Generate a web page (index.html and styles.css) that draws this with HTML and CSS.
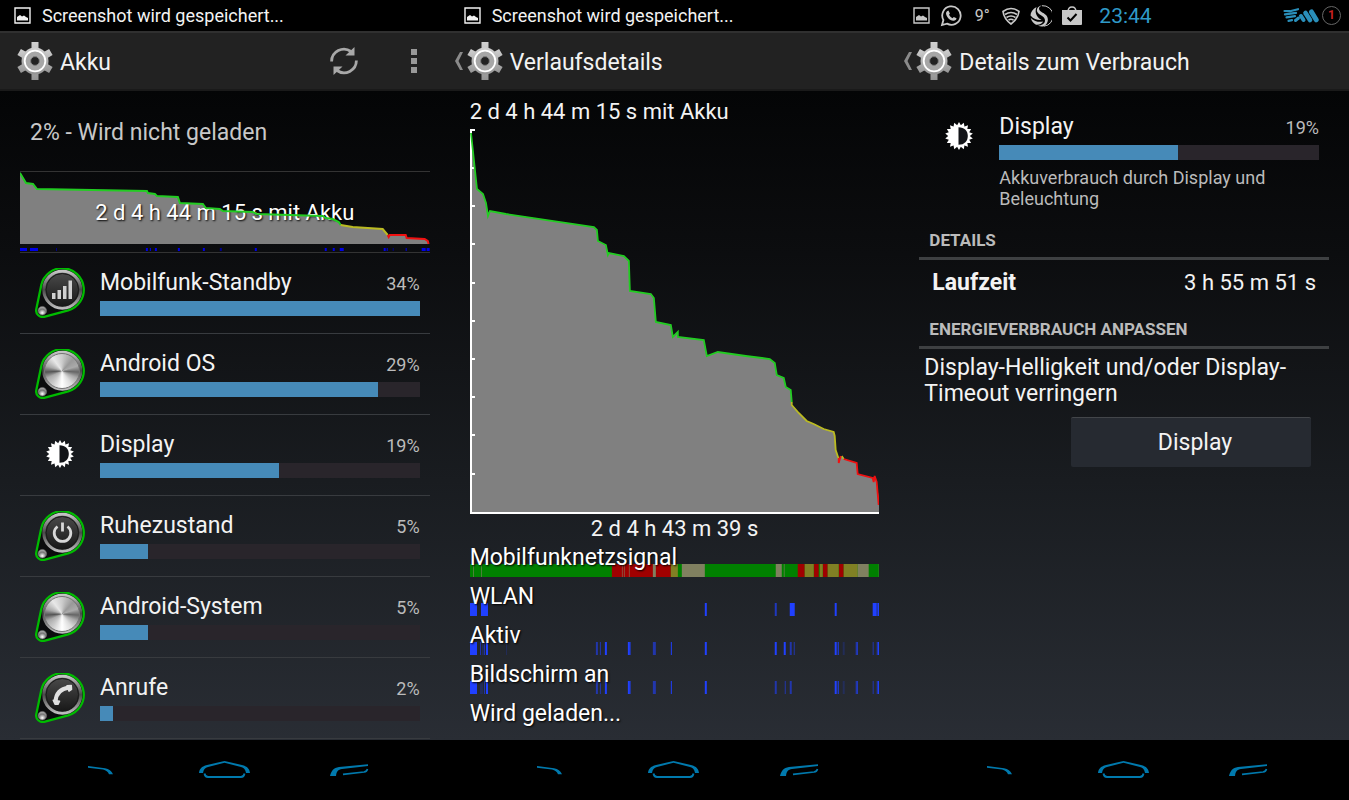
FILE: index.html
```html
<!DOCTYPE html>
<html lang="de">
<head>
    <meta charset="UTF-8">
    <meta name="viewport" content="width=device-width, initial-scale=1.0">
    <title>Akku</title>
    <link rel="stylesheet" href="styles.css">
</head>
<body>
    <!-- shared icons -->
    <svg class="defs" width="0" height="0" aria-hidden="true">
        <defs>
            <linearGradient id="gearFill" x1="0" y1="0" x2="0" y2="1">
                <stop offset="0" stop-color="#d0d0d0"/>
                <stop offset="1" stop-color="#949494"/>
            </linearGradient>
            <linearGradient id="ringFill" x1="0" y1="0" x2="0" y2="1">
                <stop offset="0" stop-color="#c4c4c4"/>
                <stop offset="0.5" stop-color="#4a4a4a"/>
                <stop offset="1" stop-color="#bdbdbd"/>
            </linearGradient>
            <linearGradient id="discFill" x1="0" y1="0" x2="0" y2="1">
                <stop offset="0" stop-color="#4c4c4c"/>
                <stop offset="1" stop-color="#151515"/>
            </linearGradient>
            <radialGradient id="knobFill" cx="0.5" cy="0.75" r="0.7">
                <stop offset="0" stop-color="#ffffff"/>
                <stop offset="0.6" stop-color="#777777"/>
                <stop offset="1" stop-color="#b0b0b0"/>
            </radialGradient>
            <symbol id="gear" viewBox="0 0 36 38">
                <g fill="url(#gearFill)">
                    <path d="M14.5 0h7v9h-7zM14.5 29h7v9h-7z"/>
                    <path d="M3.9 7l-3.5 6.1 8 4.6 3.5-6.1zM32.1 7l3.5 6.1-8 4.6-3.5-6.1zM3.9 31l-3.5-6.1 8-4.6 3.5 6.1zM32.1 31l3.5-6.1-8-4.6-3.500 6.1z"/>
                    <circle cx="18" cy="19" r="13.5"/>
                </g>
                <circle cx="18" cy="19" r="10.3" fill="#a6a6a6" stroke="#fff" stroke-width="1.8"/>
                <circle cx="18" cy="19" r="4.4" fill="#222" stroke="#808080" stroke-width="1"/>
            </symbol>
            <symbol id="picture" viewBox="0 0 17 17">
                <path d="M1 1h15v15H1z" fill="none" stroke="currentColor" stroke-width="1.4"/>
                <path d="M3 13.5V10l3-2 2 1.5 2-1 2 1.5 2 1v2.5z" fill="currentColor"/>
            </symbol>
            <symbol id="brightness" viewBox="-14 -14 28 28">
                <g fill="#fff">
                    <path id="tri" d="M0-14L12.1 7h-24.2z"/>
                    <use href="#tri" transform="rotate(20)"/>
                    <use href="#tri" transform="rotate(40)"/>
                    <use href="#tri" transform="rotate(60)"/>
                    <use href="#tri" transform="rotate(80)"/>
                    <use href="#tri" transform="rotate(100)"/>
                </g>
                <path d="M-.5-8.8C5.5-8.8 8.8-5 8.8 0S5.5 8.8-.5 8.8z" fill="#121418"/>
            </symbol>
            <symbol id="orb" viewBox="0 0 50 50">
                <path d="M6.3 17.1A21.5 21.5 0 1 1 33.2 42.4L9.1 48.8A6.5 6.5 0 0 1 1.2 41.6z" fill="#0b0c0d" stroke="#0b0" stroke-width="2.3"/>
                <circle cx="27.3" cy="21.7" r="18.5" fill="url(#discFill)" stroke="url(#ringFill)" stroke-width="3"/>
                <circle cx="27.3" cy="21.7" r="16.2" fill="none" stroke="#1a1a1a" stroke-width="1"/>
                <circle cx="7.3" cy="42.7" r="4.3" fill="url(#knobFill)" stroke="#666" stroke-width="0.6"/>
            </symbol>
            <symbol id="navBack" viewBox="0 0 52 20">
                <path d="M14 6L31 8.2C35 8.8 37.5 11 39 14.3H35C34 11.5 32 10 29 9.4L14 7.8z" fill="currentColor"/>
            </symbol>
            <symbol id="navHome" viewBox="0 0 52 20">
                <path d="M0 13C.5 8.5 3 6.500 7 5.2L25.5 1L44 5.2C48 6.5 50.5 8.5 51 13H47C46.5 9.5 45 8 42 7L25.5 2.8L9 7C6 8 4.5 9.5 4 13z" fill="currentColor"/>
                <path d="M5.5 13.5Q6 17 9 17H42Q45 17 45.5 13.5" fill="none" stroke="currentColor" stroke-width="1.8"/>
            </symbol>
            <symbol id="navRecent" viewBox="0 0 52 20">
                <path d="M6 16C7.500 10.5 9.5 8 15 7L44 4.2V6L18 9C14 9.6 12.5 11.5 12 16z" fill="currentColor"/>
                <path d="M19 14.4L40 12Q43 11.5 43.5 9" fill="none" stroke="currentColor" stroke-width="1.6"/>
            </symbol>
        </defs>
    </svg>

    <main class="screens">
        <!-- battery overview -->
        <section class="screen">
            <div class="status">
                <svg class="pic"><use href="#picture"/></svg>
                <span>Screenshot wird gespeichert...</span>
            </div>
            <header class="bar">
                <span class="back"></span>
                <svg class="gear"><use href="#gear"/></svg>
                <h1>Akku</h1>
                <button class="action refresh" aria-label="Aktualisieren">
                    <svg width="28" height="30" viewBox="0 0 28 30" fill="none" stroke="#a8a8a8" stroke-width="2.8">
                        <path d="M1.6 15.5A12.3 12.3 0 0 1 21 5.5"/>
                        <path d="M26.4 14.5A12.3 12.3 0 0 1 7 24.5"/>
                        <path d="M24.5 1v8.5H15.5z" fill="#a8a8a8" stroke="none"/>
                        <path d="M3.5 29v-8.5H12.5z" fill="#a8a8a8" stroke="none"/>
                    </svg>
                </button>
                <button class="action more" aria-label="Menü">
                    <svg width="6" height="26" viewBox="0 0 6 26" fill="#999"><path d="M0 1h6v6H0zM0 10h6v6H0zM0 19h6v6H0z"/></svg>
                </button>
            </header>
            <div class="content">
                <p class="level">2% - Wird nicht geladen</p>
                <div class="mini">
                    <svg viewBox="0 0 410 80" preserveAspectRatio="none">
                        <path d="M0 0L6 11L13 12L17 17L127 19L128 21L135 22L137 24L158 25L160 31L183 32L186 36L200 37L203 39L233 40L237 42L303 44L306 46L313 47L319 50L321 53L333 55L363 57L368 63L386 63L387 66L405 67L409 69V72H0z" fill="#808080"/>
                        <path d="M0 77.5h7M10 77.5h8M126 77.5h2M130 77.5h1M135 77.5h2M158 77.5h2M183 77.5h2M235 77.5h2M305 77.5h2M313 77.5h2M320 77.5h4M364 77.5h2M367 77.5h1M386 77.5h1M402 77.5h4M407 77.5h3" stroke="#0000e6" stroke-width="3"/>
                        <path d="M36 77.5h1M200 77.5h2M373 77.5h1" stroke="#00008a" stroke-width="3"/>
                    </svg>
                    <span>2 d 4 h 44 m 15 s mit Akku</span>
                    <svg class="line" viewBox="0 0 410 80" preserveAspectRatio="none">
                        <path d="M0 1L6 11L13 12L17 17L127 19L128 21L135 22L137 24L158 25L160 31L183 32L186 36L200 37L203 39L233 40L237 42L303 44L306 46L313 47L319 50L321 53" stroke="#2c2"/>
                        <path d="M321 53L333 55L363 57L368 63" stroke="#bb2"/>
                        <path d="M368 63L369 65L370 63L386 63L387 66L405 67L408 69L409 72" stroke="#f01010"/>
                    </svg>
                </div>
                <ul class="usage">
                    <li>
                        <div class="icon">
                            <div class="orb">
                                <svg><use href="#orb"/></svg>
                                <svg class="glyph" viewBox="0 0 50 50" fill="#d0d0d0"><path d="M17 25h3.5v6H17zM22.5 22H26v9h-3.5zM28 18h3.5v13H28zM33.5 12.5H37V31h-3.5z"/></svg>
                            </div>
                        </div>
                        <div class="info">
                            <div class="label"><span>Mobilfunk-Standby</span><small>34%</small></div>
                            <div class="track"><div class="fill" style="width: 100%"></div></div>
                        </div>
                    </li>
                    <li>
                        <div class="icon">
                            <div class="orb"><svg><use href="#orb"/></svg><i class="metal"></i></div>
                        </div>
                        <div class="info">
                            <div class="label"><span>Android OS</span><small>29%</small></div>
                            <div class="track"><div class="fill" style="width: 87%"></div></div>
                        </div>
                    </li>
                    <li>
                        <div class="icon"><svg class="sun"><use href="#brightness"/></svg></div>
                        <div class="info">
                            <div class="label"><span>Display</span><small>19%</small></div>
                            <div class="track"><div class="fill" style="width: 56%"></div></div>
                        </div>
                    </li>
                    <li>
                        <div class="icon">
                            <div class="orb">
                                <svg><use href="#orb"/></svg>
                                <svg class="glyph" viewBox="0 0 50 50" fill="none" stroke="#d8d8d8" stroke-width="2.8"><path d="M22.5 15.5A8.3 8.3 0 1 0 32.5 15.5M27.5 11.5v9"/></svg>
                            </div>
                        </div>
                        <div class="info">
                            <div class="label"><span>Ruhezustand</span><small>5%</small></div>
                            <div class="track"><div class="fill" style="width: 15%"></div></div>
                        </div>
                    </li>
                    <li>
                        <div class="icon">
                            <div class="orb"><svg><use href="#orb"/></svg><i class="metal"></i></div>
                        </div>
                        <div class="info">
                            <div class="label"><span>Android-System</span><small>5%</small></div>
                            <div class="track"><div class="fill" style="width: 15%"></div></div>
                        </div>
                    </li>
                    <li>
                        <div class="icon">
                            <div class="orb">
                                <svg><use href="#orb"/></svg>
                                <svg class="glyph" viewBox="0 0 50 50" fill="none" stroke="#e0e0e0">
                                    <path d="M20.5 28.5Q21 16.500 34 14.5" stroke-width="4"/>
                                    <path d="M32 12.6L36.3 12.4L36.6 16.500L34 18.2zM18.2 27.2L20 31.2L23 31.4L24.6 28.2z" fill="#e0e0e0" stroke-width="1.4" stroke-linejoin="round"/>
                                </svg>
                            </div>
                        </div>
                        <div class="info">
                            <div class="label"><span>Anrufe</span><small>2%</small></div>
                            <div class="track"><div class="fill" style="width: 4%"></div></div>
                        </div>
                    </li>
                </ul>
            </div>
            <nav class="nav">
                <button aria-label="Zurück"><svg><use href="#navBack"/></svg></button>
                <button aria-label="Startseite"><svg><use href="#navHome"/></svg></button>
                <button aria-label="Letzte Apps"><svg><use href="#navRecent"/></svg></button>
            </nav>
        </section>

        <!-- history -->
        <section class="screen">
            <div class="status">
                <svg class="pic"><use href="#picture"/></svg>
                <span>Screenshot wird gespeichert...</span>
            </div>
            <header class="bar">
                <a class="back" href="#" aria-label="Nach oben"><svg width="10" height="20" viewBox="0 0 10 20"><path d="M9 1H6L1 10l5 9H9L4.500 10z" fill="#8a8a8a"/></svg></a>
                <svg class="gear"><use href="#gear"/></svg>
                <h1>Verlaufsdetails</h1>
            </header>
            <div class="content">
                <p class="since">2 d 4 h 44 m 15 s mit Akku</p>
                <svg class="chart" viewBox="0 0 410 385" preserveAspectRatio="none">
                    <path d="M1 2L7 60L13 65L16 74L18 87L20 82L36 85L124 98L127 101L128 112L136 116L138 126L139 124L154 127L159 132L160 162L181 165L184 169L186 193L201 196L203 208L208 203L208 208L234 211L237 227L248 223L276 227L300 230L305 234L307 246L314 249L316 258L321 261L322 276L329 284L337 292L344 295L354 300L364 303L365 307L366 321L369 332L371 327L374 330L387 334L388 345L403 349L405 348L407 353L410 376V384H1z" fill="#808080"/>
                    <path d="M1 0v385M0 1h5M0 39h5M0 77h5M0 115h5M0 154h5M0 192h5M0 230h5M0 268h5M0 306h5M0 345h5M0 384h410" stroke="#fff" stroke-width="2"/>
                    <g fill="none" stroke-width="1.8">
                        <path d="M1 4L7 60L13 65L16 74L18 87L20 82L36 85L124 98L127 101L128 112L136 116L138 126L139 124L154 127L159 132L160 162L181 165L184 169L186 193L201 196L203 208L208 203L208 208L234 211L237 227L248 223L276 227L300 230L305 234L307 246L314 249L316 258L321 261L322 273" stroke="#2c2"/>
                        <path d="M322 273V276L329 284L337 292L344 295L354 300L364 303L365 307L366 321L369 330M372 327L374 330" stroke="#bb2"/>
                        <path d="M369 329V334L371 327M374 330L387 334L388 345L403 349L404 353L405 347L407 353L409 376" stroke="#f01010"/>
                    </g>
                </svg>
                <p class="span">2 d 4 h 43 m 39 s</p>
                <div class="event">
                    <span>Mobilfunknetzsignal</span>
                    <svg viewBox="0 0 410 13" preserveAspectRatio="none" stroke-width="13">
                        <path d="M0 6.5h410" stroke="#008000"/>
                        <path d="M142 6.5h59M328 6.5h7M344 6.5h5M353 6.5h5M369 6.5h5" stroke="#a00000"/>
                        <path d="M201 6.5h7M335 6.5h9M350 6.5h3M358 6.5h11M374 6.5h14" stroke="#808024"/>
                        <path d="M183 6.5h3M212 6.5h23M306 6.5h6M388 6.5h11" stroke="#808060"/>
                        <path d="M3 6.5h1M11 6.5h1M152 6.5h1M154 6.5h1M159 6.5h1M314 6.5h1M409 6.5h1" stroke="#808060" stroke-opacity="0.6"/>
                    </svg>
                </div>
                <div class="event">
                    <span>WLAN</span>
                    <svg viewBox="0 0 410 13" preserveAspectRatio="none" stroke-width="13" stroke="#2040ff">
                        <path d="M0 6.5h7M11 6.5h7M235 6.5h2M320 6.5h5M365 6.5h2M403 6.5h4M408 6.5h2"/>
                        <path d="M305 6.5h2M407 6.5h1" stroke-opacity="0.7"/>
                    </svg>
                </div>
                <div class="event">
                    <span>Aktiv</span>
                    <svg viewBox="0 0 410 13" preserveAspectRatio="none" stroke-width="13" stroke="#2040ff">
                        <path d="M0 6.5h7M16 6.5h2M135 6.5h2M158 6.5h2M201 6.5h1M235 6.5h2M305 6.5h2M314 6.5h2M365 6.5h2M368 6.5h1M387 6.5h1M408 6.5h2"/>
                        <path d="M10 6.5h1M14 6.5h1M126 6.5h2M130 6.5h1M160 6.5h1M183 6.5h3M320 6.5h2M324 6.5h1M386 6.5h1M403 6.5h1M407 6.5h1" stroke-opacity="0.6"/>
                        <path d="M12 6.5h2M36 6.5h1M373 6.5h2" stroke-opacity="0.2"/>
                    </svg>
                </div>
                <div class="event">
                    <span>Bildschirm an</span>
                    <svg viewBox="0 0 410 13" preserveAspectRatio="none" stroke-width="13" stroke="#2040ff">
                        <path d="M0 6.5h7M16 6.5h2M135 6.5h2M158 6.5h2M201 6.5h1M235 6.5h2M365 6.5h2M368 6.5h1M387 6.5h1M408 6.5h2"/>
                        <path d="M14 6.5h1M126 6.5h2M130 6.5h1M160 6.5h1M183 6.5h3M305 6.5h2M315 6.5h1M320 6.5h2M386 6.5h1M403 6.5h1M407 6.5h1" stroke-opacity="0.6"/>
                        <path d="M10 6.5h3M373 6.5h2" stroke-opacity="0.2"/>
                    </svg>
                </div>
                <div class="event"><span>Wird geladen...</span></div>
            </div>
            <nav class="nav">
                <button aria-label="Zurück"><svg><use href="#navBack"/></svg></button>
                <button aria-label="Startseite"><svg><use href="#navHome"/></svg></button>
                <button aria-label="Letzte Apps"><svg><use href="#navRecent"/></svg></button>
            </nav>
        </section>

        <!-- usage details -->
        <section class="screen">
            <div class="status tray">
                <svg class="pic"><use href="#picture"/></svg>
                <svg width="22" height="22" viewBox="0 0 22 22">
                    <path d="M2 20l1.4-5A9.2 9.2 0 1 1 7 18.6z" fill="none" stroke="#c8c8c8" stroke-width="1.8"/>
                    <path d="M7 6.2l1.4-.6 1.5 2.8-.9 1.4c.8 1.6 1.9 2.6 3.5 3.4l1.3-1.3 2.7 1.4c0 1.6-1.6 2.7-3.2 2.5C9.5 15.4 6.2 11.6 6 8.2c0-.8.4-1.5 1-2z" fill="#c8c8c8"/>
                </svg>
                <span class="temp">9°</span>
                <svg width="18" height="18" viewBox="0 0 18 18" fill="none" stroke="#c8c8c8" stroke-width="1.7">
                    <path d="M1 4.5Q9-1.5 17 4.5Q16 12 9 17Q2 12 1 4.5z"/>
                    <path d="M3 7.5Q9 3.5 15 7.5M4.5 10.5Q9 7.5 13.5 10.5M6.5 13Q9 11.5 11.5 13"/>
                </svg>
                <svg width="22" height="22" viewBox="0 0 22 22">
                    <path d="M12 .7A10.3 10.3 0 0 1 14 21.200" fill="none" stroke="#c8c8c8" stroke-width="1"/>
                    <path d="M12 .5C7.5 1 5.500 5 8 8C10.500 10.500 15 11.500 15 15.500C15 19 11.500 20.500 8 20.500C9.500 21.500 12 21.800 14 21.200C18.500 18.500 19 13 16 10C13.500 7.500 9 6.500 9 3.500C9 2 10.500 1 12 .5z" fill="#c8c8c8"/>
                    <path d="M6.500 2C2.500 4 .5 7.500 .5 10.500C4 14.500 8 15.500 11.500 15C9 13.500 3.500 9.500 6.500 2zM.8 13C1.500 16 3.500 18.500 6 19.700C9.500 20 12.500 18.500 13 16.500C9 17.500 4.500 16.500 .8 13z" fill="#c8c8c8"/>
                </svg>
                <svg width="20" height="20" viewBox="0 0 20 20">
                    <path d="M6 6Q6 1 10 1T14 6" fill="none" stroke="#c8c8c8" stroke-width="1.4"/>
                    <path d="M0 4h20v14q0 1-1 1H1q-1 0-1-1z" fill="#c8c8c8"/>
                    <path d="M5.5 11.5l3 3 6-6.5" fill="none" stroke="#000" stroke-width="2"/>
                </svg>
                <time>23:44</time>
                <svg class="signal" width="36" height="16" viewBox="0 0 36 16" fill="none" stroke="#2a8fba" stroke-linecap="round">
                    <path d="M1.500 3L7 3.200L15 1.200M2 6.300L13 4.800" stroke-width="2.200"/>
                    <path d="M3.500 9.300L12 8.200M5.500 12.800L9 12.200" stroke-width="2.200"/>
                    <path d="M12.500 12.500L15.500 10" stroke-width="3"/>
                    <path d="M18 8L20.500 12" stroke-width="4"/>
                    <path d="M22.500 5L27 12" stroke-width="4.600"/>
                    <path d="M28.500 4L33.200 11.800" stroke-width="5"/>
                </svg>
                <span class="count">1</span>
            </div>
            <header class="bar">
                <a class="back" href="#" aria-label="Nach oben"><svg width="10" height="20" viewBox="0 0 10 20"><path d="M9 1H6L1 10l5 9H9L4.500 10z" fill="#8a8a8a"/></svg></a>
                <svg class="gear"><use href="#gear"/></svg>
                <h1>Details zum Verbrauch</h1>
            </header>
            <div class="content">
                <div class="summary">
                    <div class="icon"><svg class="sun"><use href="#brightness"/></svg></div>
                    <div class="info">
                        <div class="label"><span>Display</span><small>19%</small></div>
                        <div class="track"><div class="fill" style="width: 56%"></div></div>
                        <p>Akkuverbrauch durch Display und Beleuchtung</p>
                    </div>
                </div>
                <h2>DETAILS</h2>
                <dl class="pair"><dt>Laufzeit</dt><dd>3 h 55 m 51 s</dd></dl>
                <h2>ENERGIEVERBRAUCH ANPASSEN</h2>
                <p class="hint">Display-Helligkeit und/oder Display-Timeout verringern</p>
                <button class="open">Display</button>
            </div>
            <nav class="nav">
                <button aria-label="Zurück"><svg><use href="#navBack"/></svg></button>
                <button aria-label="Startseite"><svg><use href="#navHome"/></svg></button>
                <button aria-label="Letzte Apps"><svg><use href="#navRecent"/></svg></button>
            </nav>
        </section>
    </main>
</body>
</html>
```
FILE: styles.css
```css
* {
    box-sizing: border-box;
    margin: 0;
    padding: 0;
}

body {
    font-family: Roboto, "Noto Sans", sans-serif;
    font-size: 23px;
    line-height: 26px;
    color: #f3f3f3;
    background: #000;
}

button {
    font: inherit;
    color: inherit;
    background: none;
    border: none;
    cursor: pointer;
}

svg {
    display: block;
    flex-shrink: 0;
}

.defs {
    position: absolute;
}

.screens {
    display: grid;
    grid-template-columns: repeat(3, 1fr);
    min-height: 100vh;
}

.screen {
    display: flex;
    flex-direction: column;
    min-width: 0;
}

/* status bar */
.status {
    display: flex;
    align-items: center;
    gap: 11px;
    height: 31px;
    padding: 0 8px 0 14px;
    font-size: 18px;
    background: #000;
}

.pic {
    width: 17px;
    height: 17px;
}

.tray {
    gap: 10px;
    color: #c8c8c8;
}

.temp {
    width: 20px;
    font-size: 16px;
    text-align: center;
}

.tray time {
    margin-left: 7px;
    font-size: 21px;
    color: #2f9ac8;
}

.signal {
    margin-left: auto;
}

.count {
    width: 19px;
    height: 19px;
    margin-left: -7px;
    border: 1px solid #666;
    border-radius: 50%;
    font-size: 12px;
    font-weight: bold;
    line-height: 17px;
    text-align: center;
    color: #c22;
}

/* action bar */
.bar {
    display: flex;
    align-items: center;
    height: 60px;
    background: #222;
    border-top: 2px solid #303030;
    border-bottom: 2px solid #1a1a1a;
}

.back {
    width: 17px;
    padding-left: 4px;
}

.gear {
    width: 36px;
    height: 38px;
}

.bar h1 {
    margin-left: 7px;
    padding-top: 3px;
    font-size: 23px;
    font-weight: normal;
}

.action {
    display: flex;
    justify-content: center;
}

.refresh {
    width: 70px;
    margin-left: auto;
}

.more {
    width: 71px;
}

/* content */
.content {
    flex: 1;
    padding: 0 20px;
    background: linear-gradient(#040506, #0c0d0f 25%, #191c20 60%, #292d34);
}

.level {
    height: 80px;
    padding: 0 10px;
    line-height: 84px;
    color: #c8c8c8;
}

.mini {
    display: grid;
    height: 82px;
    border-top: 1px solid #333;
    border-bottom: 1px solid #333;
}

.mini > * {
    grid-area: 1 / 1;
    width: 100%;
    height: 80px;
}

.mini span {
    font-size: 22px;
    line-height: 82px;
    text-align: center;
    color: #fff;
    text-shadow: 1px 1px 2px #000;
}

.line {
    fill: none;
    stroke-width: 2px;
}

.usage {
    list-style: none;
}

.usage li {
    display: flex;
    height: 81px;
    padding: 15px 10px 0 0;
    border-bottom: 1px solid #383b3f;
}

.icon {
    display: flex;
    justify-content: center;
    width: 80px;
    flex-shrink: 0;
}

.orb {
    position: relative;
    width: 50px;
    height: 50px;
}

.orb svg {
    width: 50px;
    height: 50px;
}

.orb .glyph {
    position: absolute;
    top: 0;
    left: 0;
}

.metal {
    position: absolute;
    top: 4px;
    left: 9px;
    width: 36px;
    height: 36px;
    border: 1px solid #777;
    border-radius: 50%;
    background: conic-gradient(#ccc, #999 12%, #aaa 20%, #666 26%, #aaa 32%, #ddd 40%, #fff 50%, #ccc 60%, #aaa 68%, #555 74%, #aaa 80%, #e8e8e8 90%, #ccc);
}

.sun {
    width: 28px;
    height: 28px;
    margin-top: 10px;
}

.info {
    flex: 1;
}

.label {
    display: flex;
    justify-content: space-between;
    height: 30px;
    line-height: 30px;
}

.label small {
    font-size: 18px;
    line-height: 32px;
    color: #bbb;
}

.track {
    height: 15px;
    margin-top: 3px;
    background: #29252b;
}

.fill {
    height: 15px;
    background: #468ab8;
}

/* history */
.since {
    padding: 8px 0 4px;
    font-size: 22px;
}

.chart {
    width: 100%;
    height: 385px;
}

.span {
    padding: 2px 0 8px;
    font-size: 22px;
    text-align: center;
}

.event {
    height: 39px;
}

.event:last-child {
    height: 34px;
}

.event span {
    position: relative;
    display: block;
    height: 14px;
    line-height: 16px;
    color: #fff;
    text-shadow: 1px 1px 2px #000;
}

.event svg {
    width: 100%;
    height: 13px;
}

/* usage details */
.summary {
    display: flex;
    padding: 21px 10px 18px 0;
}

.summary p {
    margin-top: 7px;
    font-size: 18px;
    line-height: 21px;
    color: #bbb;
}

h2 {
    padding: 0 10px 4px;
    border-bottom: 3px solid #3e4042;
    font-size: 17px;
    font-weight: bold;
    color: #bbb;
}

.pair {
    display: flex;
    justify-content: space-between;
    padding: 10px 13px 20px;
}

.pair dt {
    font-weight: bold;
}

.pair dd {
    font-size: 22px;
}

.hint {
    padding: 6px 5px 10px;
}

.open {
    display: block;
    width: 240px;
    height: 50px;
    margin: 0 18px 0 auto;
    padding-left: 8px;
    background: #262a31;
    border-top: 1px solid #43464a;
    border-radius: 2px;
}

/* navigation bar */
.nav {
    display: flex;
    height: 60px;
    padding: 0 37px;
    background: #000;
}

.nav button {
    display: flex;
    flex: 1;
    align-items: center;
    justify-content: center;
    color: #0079ad;
}

.nav svg {
    width: 52px;
    height: 20px;
}
```
